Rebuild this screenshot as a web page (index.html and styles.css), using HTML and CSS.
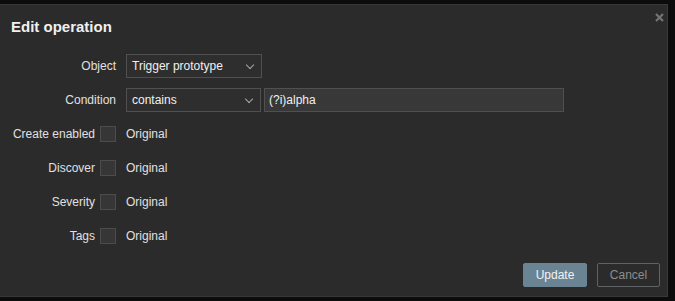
FILE: index.html
```html
<!DOCTYPE html>
<html lang="en">
<head>
    <meta charset="UTF-8">
    <title>Edit operation</title>
    <link rel="stylesheet" href="styles.css">
</head>
<body>
    <div class="dialog">
        <div class="dialog-head">
            <h4>Edit operation</h4>
            <button class="close" title="Close">
                <svg width="9" height="9" viewBox="0 0 9 9"><path d="M1 1 L8 8 M8 1 L1 8" stroke="#747474" stroke-width="2.2"/></svg>
            </button>
        </div>

        <div class="form">
            <label class="label">Object</label>
            <div class="field">
                <div class="select w-136"><span>Trigger prototype</span><i class="chevron"></i></div>
            </div>

            <label class="label">Condition</label>
            <div class="field">
                <div class="select w-135"><span>contains</span><i class="chevron"></i></div>
                <input class="text" type="text" value="(?i)alpha">
            </div>

            <label class="label">Create enabled <span class="check"></span></label>
            <div class="field">Original</div>

            <label class="label">Discover <span class="check"></span></label>
            <div class="field">Original</div>

            <label class="label">Severity <span class="check"></span></label>
            <div class="field">Original</div>

            <label class="label">Tags <span class="check"></span></label>
            <div class="field">Original</div>
        </div>

        <div class="dialog-foot">
            <button class="btn btn-main">Update</button>
            <button class="btn btn-alt">Cancel</button>
        </div>
    </div>
</body>
</html>
```

FILE: styles.css
```css
body {
    margin: 0;
    background: #0c0c0c;
    font-family: "Liberation Sans", Arial, sans-serif;
    font-size: 12px;
    color: #e6e6e6;
}

.dialog {
    margin-top: 4px;
    width: 667px;
    height: 291px;
    background: #2b2b2b;
    border: 1px solid #383838;
    border-left: none;
    display: flex;
    flex-direction: column;
    position: relative;
}

.dialog-head {
    padding: 12px 11px 8px;
}

.dialog-head h4 {
    margin: 0;
    font-size: 15px;
    line-height: 20px;
    font-weight: bold;
    color: #f0f0f0;
}

.close {
    position: absolute;
    top: 8px;
    right: 3px;
    padding: 0;
    border: none;
    background: none;
    width: 9px;
    height: 9px;
    line-height: 0;
}

.form {
    flex: 1;
    padding-top: 9px;
    display: grid;
    grid-template-columns: 116px auto;
    grid-auto-rows: 24px;
    column-gap: 10px;
    row-gap: 10px;
}

.label {
    display: flex;
    align-items: center;
    justify-content: flex-end;
    gap: 5px;
    white-space: nowrap;
    color: #e0e0e0;
}

.field {
    display: flex;
    align-items: center;
    gap: 3px;
    color: #e0e0e0;
}

.select {
    box-sizing: border-box;
    height: 24px;
    display: flex;
    align-items: center;
    justify-content: space-between;
    padding: 0 8px 0 5px;
    background: #2e2e2e;
    border: 1px solid #505050;
    color: #f0f0f0;
}

.w-136 { width: 136px; }
.w-135 { width: 135px; }

.chevron {
    width: 5px;
    height: 5px;
    border-right: 1.5px solid #a8a8a8;
    border-bottom: 1.5px solid #a8a8a8;
    transform: rotate(45deg);
    margin-top: -3px;
}

.text {
    box-sizing: border-box;
    width: 300px;
    height: 24px;
    padding: 0 4px;
    background: #383838;
    border: 1px solid #505050;
    color: #f0f0f0;
    font-family: inherit;
    font-size: 12px;
    outline: none;
}

.check {
    box-sizing: border-box;
    width: 16px;
    height: 16px;
    background: #363636;
    border: 1px solid #4c4c4c;
}

.dialog-foot {
    display: flex;
    justify-content: flex-end;
    gap: 10px;
    padding: 0 7px 9px 0;
}

.btn {
    box-sizing: border-box;
    height: 24px;
    padding: 0 11px;
    font-family: inherit;
    font-size: 12px;
    border-radius: 2px;
}

.btn-main {
    width: 64px;
    background: #6a8494;
    border: 1px solid #6a8494;
    color: #f2f2f2;
}

.btn-alt {
    width: 63px;
    background: transparent;
    border: 1px solid #5e6366;
    color: #8a8e91;
}
```
